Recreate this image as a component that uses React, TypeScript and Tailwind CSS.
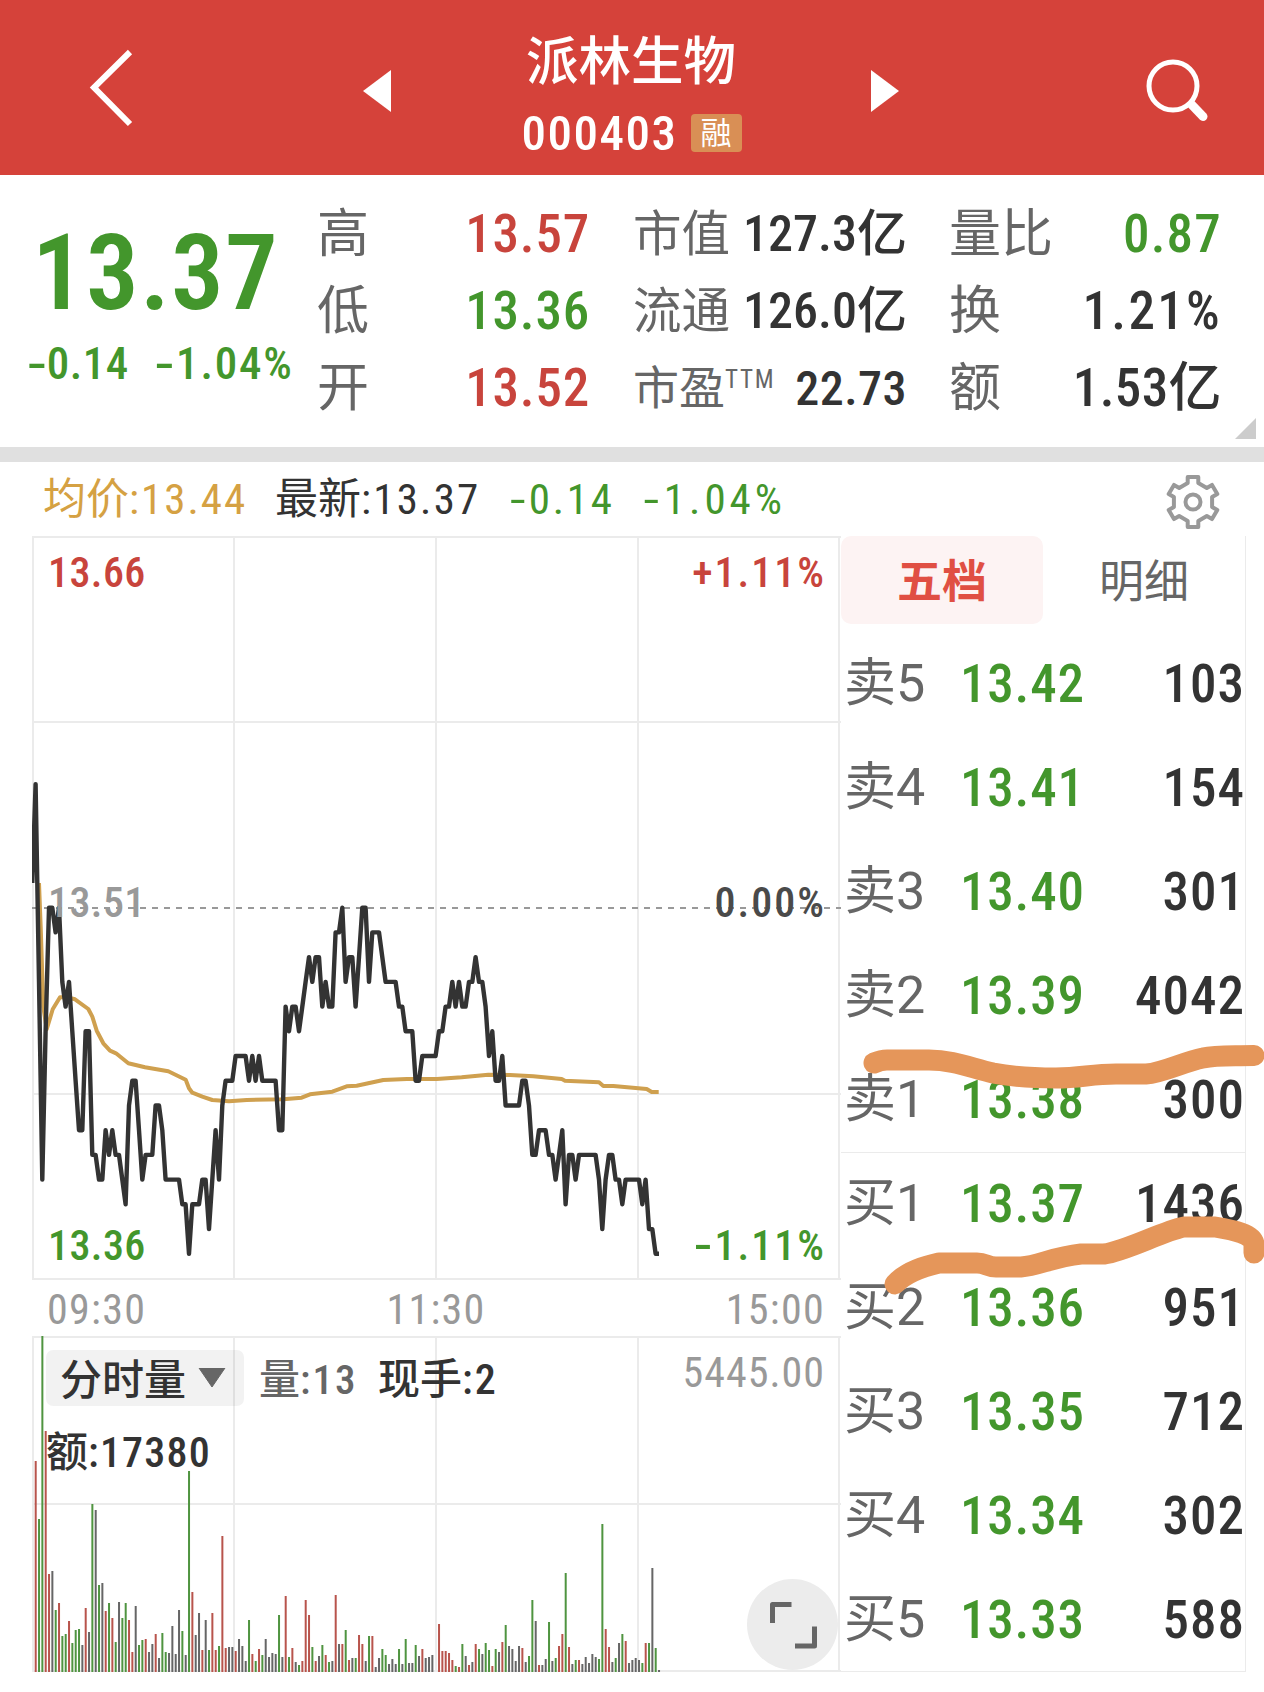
import React from 'react';
import { clsx } from 'clsx';

const UP = 'text-[#c8443c]'
const DOWN = 'text-[#43962c]'

type Level = { label: string; price: string; volume: string }

const SELLS: Level[] = [
  { label: '卖5', price: '13.42', volume: '103' },
  { label: '卖4', price: '13.41', volume: '154' },
  { label: '卖3', price: '13.40', volume: '301' },
  { label: '卖2', price: '13.39', volume: '4042' },
  { label: '卖1', price: '13.38', volume: '300' },
]

const BUYS: Level[] = [
  { label: '买1', price: '13.37', volume: '1436' },
  { label: '买2', price: '13.36', volume: '951' },
  { label: '买3', price: '13.35', volume: '712' },
  { label: '买4', price: '13.34', volume: '302' },
  { label: '买5', price: '13.33', volume: '588' },
]

// One entry per minute: cents below the previous close (13.51), "3x4" repeats 3 four times
const PRICE = `-1 -5 3 11 5 0x2 1 0 3 4 3 5 7 9x2 5x2 10x2 11x2 9 10 9 10x2 11 12 8 7x2 9 11 10x3 8x2 9
11x5 12x2 14 12x3 11x2 13 11 9 11 8 7x3 6x4 7 6 7 6 7x5 9x2 4 5 4x2 5 4 3 2 3 2x2 4 3 4x2 1x2 0 3 2x2 4
2 0x2 3 1x3 2 3x4 4x2 5x3 7x2 6x5 5x2 4x2 3 4 3 4x2 3x2 2 3x2 4 6 5 7x2 6 8x5 7x2 8 10x2 9x3 10x2 11 10
9 12 10x2 11 10x6 11 13 11 10x2 11x2 12 11x5 12 11 13x2 14x2`

const AVERAGE = [
  [7, 347], [8.7, 391], [11.3, 470.7], [14.7, 493.3], [20.7, 473.3], [28, 461.3], [34.7, 461.3], [43, 463.3],
  [56.3, 473], [60.3, 480.7], [64.7, 494.7], [71.3, 507.3], [78, 514.7], [84, 517.3], [96.3, 527.3],
  [113, 531.3], [136.3, 535.3], [153.7, 543.7], [157, 552.3], [160.3, 556.7], [170.3, 560.7], [180.3, 564],
  [197, 565.3], [214.7, 564], [251.3, 563.3], [269.7, 561.7], [278, 558.3], [300.3, 555.7], [314.7, 550.3],
  [324.7, 549.7], [351.3, 544], [374.7, 543], [404.7, 543], [429.7, 541.3], [456.3, 538.7], [478, 539],
  [501.3, 540.3], [529.7, 543], [533, 544.7], [567, 546.3], [571.3, 550], [581.3, 550], [614.7, 553],
  [619.7, 556], [626.7, 556],
]

// Volume bars, one per minute: r = up, g = down, k = flat
const VOLUME = `r211 g153 g336 r241 r98 k101 g62 r69 g36 g38 r51 g29 g42 g43 k27 r64 k40 g168 k162 g87 k89 r61
g69 r54 g30 k70 g54 g69 r52 r20 k66 g27 g32 r33 k20 k28 r38 k14 g39 g20 k19 k46 k18 k62 g41 k17 g201 r80 k37
k59 r22 k52 g22 r59 r22 g26 r136 r24 k25 k25 r21 k33 k26 k11 g52 r18 g11 r23 g17 k33 k15 k19 k18 g57 k15 r76
g15 r24 k10 g7 r11 r72 r57 g25 r11 k16 g27 r17 g10 k11 r77 k28 r28 g42 r12 k14 g14 r37 r28 k11 g36 r36 k5
k14 g23 g17 k8 k13 k8 g23 k8 g33 k9 k9 g27 k16 r23 k14 k15 k17 k0 r48 r21 r21 r19 r12 g6 r5 g28
k16 r7 k10 r28 g23 k18 g29 g22 r6 g23 k20 r30 g47 k26 k23 k11 k26 r24 k10 g16 g72 k51 r7 k7 k13 g50 k11 g14
r26 r38 g99 r25 k8 g12 r12 k8 k15 k9 k18 k15 g13 g148 r43 r25 k10 g14 k29 g38 r31 k9 k12 k14 k12 g9 r29 g29
k104 g24 k2`

const BAR_COLOR: Record<string, string> = { r: '#b8544c', g: '#4f9440', k: '#666666' }
const STEP = 10 / 3

const pricePoints = PRICE.split(/\s+/)
  .flatMap((token) => {
    const [value, count = '1'] = token.split('x')
    return Array<number>(Number(count)).fill(Number(value))
  })
  .map((cents, i) => `${(0.3 + i * STEP).toFixed(1)},${(371.7 + cents * 24.72).toFixed(1)}`)
  .join(' ')

const gearPath = `${[0, 60, 120, 180, 240, 300]
  .flatMap((deg) => {
    const a = (deg * Math.PI) / 180
    return [[-5.3, -19], [-5.3, -25], [5.3, -25], [5.3, -19]].map(
      ([x, y]) => `${(x * Math.cos(a) - y * Math.sin(a)).toFixed(2)} ${(x * Math.sin(a) + y * Math.cos(a)).toFixed(2)}`,
    )
  })
  .reduce((d, p, i) => d + (i ? ' L' : 'M') + p, '')} Z`

// Negative figures get a longer dash than the font's own hyphen
const Negative = ({ children, className }: { children: string, className?: string }) => (
  <span className={clsx(DOWN, className)}>
    <span className="mx-[0.06em] inline-block scale-x-150">-</span>{children}
  </span>
)

const Header = () => (
  <header className="flex h-[175px] items-center bg-[#d5423a] text-white">
    <svg className="mt-[-2px] ml-[87px] h-[84px] w-[50px]" viewBox="0 0 50 84" fill="none" stroke="#fff" strokeWidth="6">
      <path d="M43 7 L7 42.5 L43 79" />
    </svg>
    <svg className="mt-[6px] ml-[226px] h-[42px] w-[28px]" viewBox="0 0 28 42" fill="#fff">
      <path d="M0 21 L28 0 V42 Z" />
    </svg>
    <div className="flex w-[480px] flex-col items-center">
      <h1 className="mt-[17px] h-[76px] text-[52.5px] leading-[76px] font-medium">派林生物</h1>
      <div className="flex h-[68px] items-center pl-[1px]">
        <span className="text-[49px] leading-[68px] font-medium tracking-[1.5px]">000403</span>
        <span className="mt-[-2px] ml-[13px] flex h-[38px] w-[51px] items-center justify-center rounded-[4px] bg-[#d98f55] text-[31px] leading-none">融</span>
      </div>
    </div>
    <svg className="mt-[6px] h-[42px] w-[28px]" viewBox="0 0 28 42" fill="#fff">
      <path d="M28 21 L0 0 V42 Z" />
    </svg>
    <svg className="mt-[7px] ml-[244px] h-[70px] w-[70px]" viewBox="0 0 70 70" fill="none" stroke="#fff">
      <circle cx="30" cy="30" r="24" strokeWidth="5" />
      <path d="M49 49 L60 60.5" strokeWidth="9" strokeLinecap="round" />
    </svg>
  </header>
)

const Stat = ({ label, value, tone, labelClass, valueClass }: {
  label: React.ReactNode
  value: string
  tone: string
  labelClass?: string
  valueClass?: string
}) => (
  <div className="flex h-[77px] justify-between leading-[77px]">
    <span className={clsx('text-[#666]', labelClass ?? 'text-[52px]')}>{label}</span>
    <span className={clsx('font-medium', tone, valueClass ?? 'text-[53px] tracking-[0.8px]')}>{value}</span>
  </div>
)

const Quote = () => (
  <section className="relative flex h-[272px] pt-[20.5px] whitespace-nowrap">
    <div className="w-[317px]">
      <div className={clsx('mt-[28.5px] h-[100px] pl-[32px] text-[105px] leading-[100px] font-semibold tracking-[1.2px]', DOWN)}>13.37</div>
      <div className="mt-[15px] flex h-[50px] pl-[27px] text-[45px] leading-[50px] font-medium tracking-[0.5px]">
        <Negative className="w-[128px]">0.14</Negative>
        <Negative className="tracking-[1.8px]">1.04%</Negative>
      </div>
    </div>
    <div className="w-[273px]">
      <Stat label="高" value="13.57" tone={UP} />
      <Stat label="低" value="13.36" tone={DOWN} />
      <Stat label="开" value="13.52" tone={UP} />
    </div>
    <div className="ml-[43px] w-[274px]">
      <Stat label="市值" value="127.3亿" tone="text-[#333]" labelClass="text-[48.5px]" valueClass="text-[50px]" />
      <Stat label="流通" value="126.0亿" tone="text-[#333]" labelClass="text-[48.5px]" valueClass="text-[50px]" />
      <Stat
        label={<>市盈<sup className="top-0 align-[16px] text-[25px] leading-none tracking-[1.8px]">TTM</sup></>}
        value="22.73"
        tone="text-[#333]"
        labelClass="text-[46px]"
        valueClass="text-[48px] tracking-[0.5px]"
      />
    </div>
    <div className="ml-[42px] w-[273px]">
      <Stat label="量比" value="0.87" tone={DOWN} valueClass="text-[53px] tracking-[1.2px]" />
      <Stat label="换" value="1.21%" tone="text-[#333]" valueClass="text-[53px] tracking-[2.3px]" />
      <Stat label="额" value="1.53亿" tone="text-[#333]" valueClass="text-[53px] tracking-[0.4px]" />
    </div>
    <svg className="absolute right-[8px] bottom-[8px] h-[21px] w-[21px]" viewBox="0 0 21 21" fill="#ccc">
      <path d="M21 0 V21 H0 Z" />
    </svg>
  </section>
)

const InfoBar = () => (
  <div className="flex h-[74px] items-center pl-[43px] text-[43px] leading-[70px] whitespace-nowrap">
    <span className="w-[232px] text-[#d5a143]">均价<span className="tracking-[2px]">:13.44</span></span>
    <span className="w-[235px] text-[#333]">最新<span className="tracking-[2.2px]">:13.37</span></span>
    <Negative className="w-[134px] tracking-[2.8px]">0.14</Negative>
    <Negative className="w-[519px] tracking-[4px]">1.04%</Negative>
    <svg className="mt-[5px] h-[60px] w-[60px]" viewBox="-30 -30 60 60" fill="none" stroke="#999" strokeWidth="4" strokeLinejoin="round">
      <path d={gearPath} />
      <circle r="7.5" />
    </svg>
  </div>
)

const PriceChart = () => (
  <div className="relative h-[744px] w-[809px] text-[42px] leading-[50px] font-medium">
    <svg className="absolute inset-0 h-full w-full" viewBox="0 0 809 744" fill="none">
      <g stroke="#ebebeb" strokeWidth="2">
        <path d="M0 1 H809 M0 186 H809 M0 558 H809 M0 743 H809" />
        <path d="M1 0 V744 M202 0 V744 M404 0 V744 M606 0 V744 M807 0 V744" />
      </g>
      <path d="M0 372 H809" stroke="#999" strokeWidth="1.8" strokeDasharray="6 6" />
      <polyline points={AVERAGE.map((p) => p.join(',')).join(' ')} stroke="#cfa04f" strokeWidth="4" strokeLinejoin="round" />
      <polyline points={pricePoints} stroke="#333" strokeWidth="4.4" strokeLinejoin="round" />
    </svg>
    <div className="relative flex h-full flex-col justify-between pt-[12px] pr-[15px] pb-[9px] pl-[16px] tracking-[0.4px]">
      <div className={clsx('flex justify-between', UP)}><span>13.66</span><span className="tracking-[2px]">+1.11%</span></div>
      <div className="mb-[13px] flex justify-between text-[#999]"><span>13.51</span><span className="tracking-[2px] text-[#4a4a4a]">0.00%</span></div>
      <div className={clsx('flex justify-between', DOWN)}><span>13.36</span><Negative className="tracking-[2px]">1.11%</Negative></div>
    </div>
  </div>
)

const VolumeChart = () => (
  <div className="relative h-[336px] w-[809px] text-[42px] leading-[60px] font-medium whitespace-nowrap text-[#333]">
    <svg className="absolute inset-0 h-full w-full" viewBox="0 0 809 336">
      <path d="M0 1 H809 M0 168 H809 M0 335 H809 M1 0 V336 M202 0 V336 M404 0 V336 M606 0 V336 M807 0 V336" stroke="#ebebeb" strokeWidth="2" />
      {VOLUME.split(/\s+/).map((bar, i) => {
        const height = Number(bar.slice(1))
        return <rect key={i} x={2.7 + i * STEP} y={336 - height} width="2" height={height} fill={BAR_COLOR[bar[0]]} />
      })}
    </svg>
    <div className="relative pt-[14px] pl-[14px]">
      <div className="flex h-[56px]">
        <div className="flex w-[198px] items-center rounded-[7px] bg-black/5 pl-[14px] text-[42px] leading-[60px]">
          <span className="pt-[6px]">分时量</span>
          <svg className="ml-[12px] h-[20px] w-[28px]" viewBox="0 0 28 20" fill="#666">
            <path d="M1 0 H27 L14 19 Z" stroke="#666" strokeLinejoin="round" />
          </svg>
        </div>
        <span className="ml-[15px] w-[119px] text-[41px] text-[#666]">量<span className="tracking-[2px]">:13</span></span>
        <span className="w-[130px] text-[42px]">现手<span className="tracking-[2px]">:2</span></span>
        <span className="mt-[-7px] ml-auto pr-[16px] font-[450] tracking-[1px] text-[#999]">5445.00</span>
      </div>
      <div className="mt-[17px] h-[56px] text-[42px]">额<span className="tracking-[1.2px]">:17380</span></div>
    </div>
    <button className="absolute right-[3px] bottom-[2px] flex h-[91px] w-[91px] items-center justify-center rounded-full bg-[#ececec]">
      <svg className="h-[48px] w-[48px]" viewBox="0 0 48 48" fill="none" stroke="#666" strokeWidth="5" strokeLinejoin="round">
        <path d="M3.5 22 V3.5 H22.5 M45.5 25.5 V45 H26" />
      </svg>
    </button>
  </div>
)

const LevelRow = ({ label, price, volume }: Level) => (
  <div className="flex h-[104px] leading-[102px] font-medium">
    <span className="w-[116px] text-[52px] font-normal text-[#666] [font-stretch:100%]">{label}</span>
    <span className={clsx('text-[53px] tracking-[0.8px]', DOWN)}>{price}</span>
    <span className="ml-auto text-[53px] tracking-[1px] text-[#333]">{volume}</span>
  </div>
)

const OrderBook = () => (
  <div className="relative h-[1136px] w-[405px] border-r border-b border-[#ebebeb]">
    <div className="flex h-[97px] text-[45px] leading-[94px]">
      <div className="h-[88px] w-[202px] rounded-[10px] bg-[#fdf3f3] text-center font-bold text-[#e04f43]">五档</div>
      <div className="w-[202px] text-center text-[#666]">明细</div>
    </div>
    <div className="pl-[3px]">{SELLS.map((level) => <LevelRow key={level.label} {...level} />)}</div>
    <div className="-mt-px border-t border-[#ebebeb] pl-[3px]">{BUYS.map((level) => <LevelRow key={level.label} {...level} />)}</div>
    {/* Hand-drawn marker strokes around the best bid and ask */}
    <svg className="absolute top-[504px] left-0 h-[280px] w-[423px]" viewBox="0 0 423 280" fill="none" stroke="#e5965a" strokeWidth="21" strokeLinecap="round" strokeLinejoin="round">
      <path d="M33 23 Q40 20 46 20 H88 C112 20 130 28 152 33 C172 37 200 38 215 38 C240 38 250 34 275 34 H305 C322 33 342 22 362 18 C375 15 385 16 413 15.5" />
      <path d="M54 244 C66 231 85 226 98 223 H136 C145 223 146 227 155 227 H180 C197 226 212 217 240 214 H263 C285 211 322 191 343 187 H374 C392 190 413 194 413 205 V213" />
    </svg>
  </div>
)

const App = () => (
  <main className="h-[1692px] w-[1264px] overflow-hidden bg-white font-['Roboto','Noto_Sans_CJK_SC',sans-serif] [font-stretch:87.5%]">
    <Header />
    <Quote />
    <div className="h-[15px] bg-[#e0e0e0]" />
    <InfoBar />
    <div className="flex">
      <div className="ml-[32px] w-[809px]">
        <PriceChart />
        <div className="flex h-[56px] justify-between pr-[16px] pl-[15px] text-[42px] leading-[60px] font-[450] tracking-[1.3px] text-[#999]">
          <span>09:30</span>
          <span>11:30</span>
          <span>15:00</span>
        </div>
        <VolumeChart />
      </div>
      <OrderBook />
    </div>
  </main>
)

export default App;
